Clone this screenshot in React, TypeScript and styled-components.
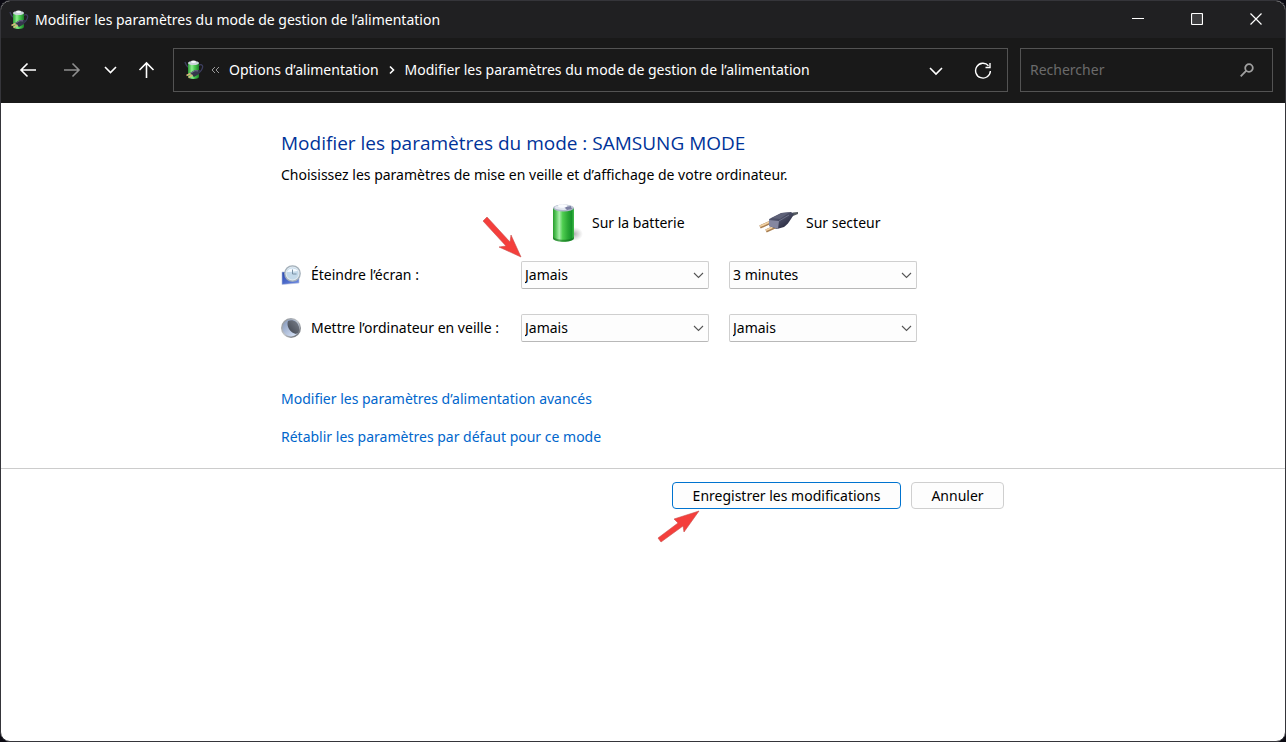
import React, { useState } from "react";
import styled, { createGlobalStyle } from "styled-components";

const GlobalStyle = createGlobalStyle`
  *, *::before, *::after { box-sizing: border-box; }
  html, body, #root { height: 100%; }
  body {
    margin: 0;
    background: #0b0a12;
    color: #000;
    font: 14px/20px "Noto Sans", "Open Sans", sans-serif;
  }
  button, input, select { font: inherit; color: inherit; margin: 0; }
  svg { display: block; flex: none; }
`;

const Window = styled.div`
  min-height: 100%;
  display: flex;
  flex-direction: column;
  border: 1px solid #35353a;
  border-radius: 10px;
  overflow: hidden;
  background: #fff;
`;

const TitleBar = styled.header`
  display: flex;
  align-items: center;
  height: 37px;
  padding-left: 8px;
  gap: 6px;
  background: #202022;
  color: #fff;
`;

const Title = styled.span`
  flex: 1;
  white-space: nowrap;
`;

const CaptionButtons = styled.div`
  display: flex;
  height: 100%;
`;

const CaptionButton = styled.button`
  display: grid;
  place-items: center;
  width: 59px;
  height: 100%;
  padding: 0 0 2px;
  border: 0;
  background: none;
  &:hover { background: #333336; }
`;

const Toolbar = styled.nav`
  display: flex;
  align-items: center;
  height: 65px;
  padding: 0 12px 2px 16px;
  background: #191919;
  color: #fff;
`;

const NavButton = styled.button<{ $dim?: boolean; $gap: number }>`
  padding: 0;
  margin-right: ${(p) => p.$gap}px;
  border: 0;
  background: none;
  color: ${(p) => (p.$dim ? "#8f8f8f" : "#fff")};
`;

const AddressBar = styled.div`
  display: flex;
  align-items: center;
  flex: 1;
  min-width: 0;
  height: 44px;
  padding: 0 15px 0 10px;
  border: 1px solid #535353;
`;

const Crumbs = styled.div`
  display: flex;
  align-items: center;
  flex: 1;
  min-width: 0;
  gap: 9px;
  margin-left: 7px;
  white-space: nowrap;
`;

const Crumb = styled.a`
  color: #fff;
  text-decoration: none;
`;

const SearchBox = styled.label`
  display: flex;
  align-items: center;
  width: 253px;
  height: 44px;
  margin-left: 12px;
  padding: 0 18px 0 9px;
  border: 1px solid #535353;
`;

const SearchInput = styled.input`
  flex: 1;
  min-width: 0;
  padding: 0;
  border: 0;
  outline: 0;
  background: none;
  &::placeholder { color: #6b6b6b; opacity: 1; }
`;

const Content = styled.main`
  padding: 27px 280px 21px;
`;

const Heading = styled.h1`
  margin: 0;
  font-family: "Open Sans", "Noto Sans", sans-serif;
  font-size: 19px;
  line-height: 26px;
  font-weight: 400;
  color: #003399;
`;

const Intro = styled.p`
  margin: 9px 0 0;
`;

const SettingsGrid = styled.div`
  display: grid;
  grid-template-columns: 220px 188px 188px;
  column-gap: 20px;
  row-gap: 25px;
  align-items: center;
  margin-top: 18px;
`;

const ColumnHeader = styled.div`
  display: flex;
  align-items: center;
  gap: 8px;
  height: 40px;
  padding-left: 30px;
  margin-bottom: -7px;
  white-space: nowrap;
`;

const RowLabel = styled.div`
  display: flex;
  align-items: center;
  gap: 10px;
  white-space: nowrap;
`;

const SelectWrap = styled.div`
  position: relative;
`;

const Select = styled.select`
  display: block;
  width: 100%;
  height: 28px;
  padding: 0 28px 0 3px;
  appearance: none;
  border: 1px solid #cfcfcf;
  border-bottom-color: #b8b8b8;
  border-radius: 2px;
  background: #fdfdfd;
`;

const SelectChevron = styled.svg`
  position: absolute;
  right: 5px;
  top: 11px;
  pointer-events: none;
`;

const Links = styled.div`
  display: flex;
  flex-direction: column;
  align-items: flex-start;
  gap: 18px;
  margin-top: 47px;
`;

const Link = styled.a`
  color: #0066cc;
  text-decoration: none;
  &:hover { text-decoration: underline; }
`;

const Footer = styled.footer`
  display: flex;
  justify-content: flex-end;
  gap: 10px;
  padding: 13px 281px;
  border-top: 1px solid #cccccc;
`;

const ButtonWrap = styled.div`
  position: relative;
`;

const Button = styled.button<{ $primary?: boolean; $width: number }>`
  display: block;
  width: ${(p) => p.$width}px;
  height: 27px;
  padding: 0;
  border: 1px solid ${(p) => (p.$primary ? "#0073cf" : "#cfcfcf")};
  border-radius: 4px;
  background: #fdfdfd;
  line-height: 24px;
  white-space: nowrap;
`;

const Pointer = styled.svg<{ $left: number; $top: number }>`
  position: absolute;
  left: ${(p) => p.$left}px;
  top: ${(p) => p.$top}px;
  pointer-events: none;
`;

const PowerIcon = () => (
  <svg width="20" height="20" viewBox="0 0 20 20" aria-hidden="true">
    <defs>
      <linearGradient id="cell" x1="0" x2="1">
        <stop offset="0" stopColor="#2b9a35" />
        <stop offset=".35" stopColor="#8df08e" />
        <stop offset=".6" stopColor="#4ccb52" />
        <stop offset="1" stopColor="#1b7f27" />
      </linearGradient>
    </defs>
    <path d="M1 2c1 3 1 4 4 6M14 6c4-3 6 0 3.500 4c-1 2-3 3-4 4" fill="none" stroke="#3c3d5e" strokeWidth="1.300" />
    <path d="M4 3v14c0 2.500 11 2.500 11 0V3z" fill="url(#cell)" />
    <ellipse cx="9.500" cy="3" rx="5.500" ry="2" fill="#c9d3da" />
    <ellipse cx="9.500" cy="1.800" rx="2.500" ry="1.200" fill="#f5f8fa" />
    <path d="M6 13l5-3 5 0-1 4-5 3z" fill="#34364c" />
    <path d="M7 13l4-2.300 3 .2" fill="none" stroke="#73758d" />
    <path d="M2.500 15.500l4-2M4.500 17.500l4-2.500" stroke="#d9b57b" strokeWidth="1.500" />
  </svg>
);

const BatteryIcon = () => (
  <svg width="33" height="40" viewBox="0 0 33 40" aria-hidden="true">
    <defs>
      <linearGradient id="battery" x1="0" x2="1">
        <stop offset="0" stopColor="#279c2c" />
        <stop offset=".15" stopColor="#5cc95f" />
        <stop offset=".3" stopColor="#a9efaa" />
        <stop offset=".46" stopColor="#4fce50" />
        <stop offset=".7" stopColor="#2ca936" />
        <stop offset=".88" stopColor="#16952a" />
        <stop offset="1" stopColor="#43bb4a" />
      </linearGradient>
      <radialGradient id="shade">
        <stop offset="0" stopColor="#777" stopOpacity=".6" />
        <stop offset="1" stopColor="#999" stopOpacity="0" />
      </radialGradient>
    </defs>
    <ellipse cx="23" cy="31" rx="9" ry="7" fill="url(#shade)" />
    <path d="M2 5v30c0 5 21 5 21 0V5z" fill="url(#battery)" />
    <path d="M2 33c0 5 21 5 21 0v2c0 5-21 5-21 0z" fill="#116b1c" opacity=".55" />
    <ellipse cx="12.500" cy="5" rx="10.500" ry="3.500" fill="#aeb7c8" />
    <ellipse cx="12.500" cy="4.500" rx="9" ry="2.500" fill="#e3e8f0" />
    <path d="M13 4l7-1 1 3-5 1z" fill="#7b7fa2" />
    <ellipse cx="11.500" cy="3" rx="4.500" ry="1.800" fill="#fafcff" />
  </svg>
);

const PlugIcon = () => (
  <svg width="39" height="24" viewBox="0 0 39 24" aria-hidden="true">
    <defs>
      <linearGradient id="plug" x1="0" y1="0" x2="1" y2="1">
        <stop offset="0" stopColor="#5c5f78" />
        <stop offset=".5" stopColor="#45485f" />
        <stop offset="1" stopColor="#17182c" />
      </linearGradient>
    </defs>
    <path d="M29 4l5-2.500 5-.5v2l-5 2-4 3z" fill="#555b60" />
    <path d="M1 16l11-5M7 20l11-5" stroke="#a87e51" strokeWidth="3.400" />
    <path d="M1 15.300l11-5M7 19.300l11-5" stroke="#f2d2a4" strokeWidth="1.800" />
    <path d="M10 9c0-1 1-1.500 2-2l10-5 10-1 3 2-3 5c-2 3-4 6-7 8l-7 2-8-3z" fill="url(#plug)" />
    <path d="M10 9l10 1-1 8-9-3z" fill="#8587a0" />
    <path d="M13 7l10-5 8-1-10 7z" fill="#666980" opacity=".7" />
    <path d="M20 10l10-6" stroke="#777b92" strokeWidth=".8" />
  </svg>
);

const DisplayIcon = () => (
  <svg width="20" height="20" viewBox="0 0 20 20" aria-hidden="true">
    <defs>
      <linearGradient id="screen" x1="0" y1="0" x2="1" y2="1">
        <stop offset="0" stopColor="#2847ad" />
        <stop offset="1" stopColor="#718ee6" />
      </linearGradient>
    </defs>
    <path d="M1 7h17v11L1 19.500z" fill="url(#screen)" stroke="#b6bfdc" strokeWidth=".6" />
    <circle cx="11.500" cy="8.500" r="7.700" fill="#e1eaf1" stroke="#a4b0ba" strokeWidth="1.300" />
    <circle cx="11.500" cy="8.500" r="6" fill="#c3d9ea" />
    <path d="M6 7a6 5 0 0 1 11-1q-6 1-11 1z" fill="#f5faff" />
    <path d="M11.500 4.500v4.500H15.500" fill="none" stroke="#7890a4" />
  </svg>
);

const SleepIcon = () => (
  <svg width="20" height="20" viewBox="0 0 20 20" aria-hidden="true">
    <defs>
      <linearGradient id="rim" x1="0" y1="0" x2="1" y2="1">
        <stop offset="0" stopColor="#858a90" />
        <stop offset=".5" stopColor="#bfc3c8" />
        <stop offset="1" stopColor="#51565d" />
      </linearGradient>
      <linearGradient id="moon" x1="0" y1="0" x2="1" y2="1">
        <stop offset="0" stopColor="#8295b8" />
        <stop offset="1" stopColor="#e2edff" />
      </linearGradient>
      <linearGradient id="night" x1="0" y1="1" x2="1" y2="0">
        <stop offset="0" stopColor="#3d424d" />
        <stop offset="1" stopColor="#7a808b" />
      </linearGradient>
    </defs>
    <circle cx="10" cy="10" r="10" fill="url(#rim)" />
    <circle cx="10" cy="10" r="8.400" fill="url(#moon)" />
    <path d="M7 3c5-2 10 1 11 6s-1 6-3 7C9 15 5 8 7 3z" fill="url(#night)" />
  </svg>
);

type FieldProps = { label: string; initial: string; children?: React.ReactNode };

const Field = ({ label, initial, children }: FieldProps) => {
  const [value, setValue] = useState(initial);
  return (
    <SelectWrap>
      <Select aria-label={label} value={value} onChange={(e) => setValue(e.target.value)}>
        <option>3 minutes</option>
        <option>Jamais</option>
      </Select>
      <SelectChevron width="11" height="7" viewBox="0 0 11 7" aria-hidden="true">
        <path d="M1 1l4.500 4.500L10 1" fill="none" stroke="#555" strokeWidth="1.100" />
      </SelectChevron>
      {children}
    </SelectWrap>
  );
};

const stroke = { fill: "none", stroke: "currentColor", strokeWidth: 1.6 } as const;

export default function App() {
  return (
    <>
      <GlobalStyle />
      <Window>
        <TitleBar>
          <PowerIcon />
          <Title>Modifier les paramètres du mode de gestion de l’alimentation</Title>
          <CaptionButtons>
            <CaptionButton aria-label="Réduire">
              <svg width="12" height="12" viewBox="0 0 12 12"><path d="M0 5.500h12" stroke="#fff" /></svg>
            </CaptionButton>
            <CaptionButton aria-label="Agrandir">
              <svg width="12" height="12" viewBox="0 0 12 12">
                <rect x=".5" y=".5" width="11" height="11" rx="1" fill="#3d3d3f" stroke="#fff" strokeWidth="1.200" />
              </svg>
            </CaptionButton>
            <CaptionButton aria-label="Fermer">
              <svg width="12" height="12" viewBox="0 0 12 12"><path d="M.5.5l11 11M11.500.5l-11 11" stroke="#fff" strokeWidth="1.200" /></svg>
            </CaptionButton>
          </CaptionButtons>
        </TitleBar>

        <Toolbar>
          <NavButton aria-label="Précédent" $gap={22}>
            <svg width="22" height="18" viewBox="0 0 22 18"><path d="M19 9H4M10.500 2.500L4 9l6.500 6.500" {...stroke} /></svg>
          </NavButton>
          <NavButton aria-label="Suivant" $dim $gap={20}>
            <svg width="22" height="18" viewBox="0 0 22 18"><path d="M3 9h15M11.500 2.500L18 9l-6.500 6.500" {...stroke} /></svg>
          </NavButton>
          <NavButton aria-label="Emplacements récents" $gap={20}>
            <svg width="14" height="18" viewBox="0 0 14 18"><path d="M2 6l5.500 5.500L13 6" {...stroke} /></svg>
          </NavButton>
          <NavButton aria-label="Dossier parent" $gap={18}>
            <svg width="18" height="18" viewBox="0 0 18 18"><path d="M9.500 17V2M2.500 9l7-7 7 7" {...stroke} /></svg>
          </NavButton>

          <AddressBar>
            <PowerIcon />
            <Crumbs>
              <svg width="9" height="8" viewBox="0 0 9 8" aria-hidden="true">
                <path d="M4 1L1 4l3 3M8 1L5 4l3 3" fill="none" stroke="#9a9a9a" />
              </svg>
              <Crumb href="#options">Options d’alimentation</Crumb>
              <svg width="8" height="10" viewBox="0 0 8 10" aria-hidden="true">
                <path d="M2 1.500L5.500 5 2 8.500" {...stroke} />
              </svg>
              <Crumb href="#mode">Modifier les paramètres du mode de gestion de l’alimentation</Crumb>
            </Crumbs>
            <NavButton aria-label="Historique" $gap={31}>
              <svg width="14" height="18" viewBox="0 0 14 18"><path d="M1 7l6 6 6-6" {...stroke} /></svg>
            </NavButton>
            <NavButton aria-label="Actualiser" $gap={0}>
              <svg width="18" height="18" viewBox="0 0 18 18">
                <path d="M14.500 4.700A7.400 7.400 0 1 0 16.400 10M16 2v4.500h-4.500" {...stroke} strokeWidth={1.4} />
              </svg>
            </NavButton>
          </AddressBar>

          <SearchBox>
            <SearchInput type="text" placeholder="Rechercher" aria-label="Rechercher" />
            <svg width="14" height="14" viewBox="0 0 14 14" aria-hidden="true">
              <circle cx="9" cy="5" r="3.800" fill="none" stroke="#a0a0a0" strokeWidth="1.800" />
              <path d="M6.300 7.700L.7 13.300" stroke="#a0a0a0" strokeWidth="1.800" />
            </svg>
          </SearchBox>
        </Toolbar>

        <Content>
          <Heading>Modifier les paramètres du mode : SAMSUNG MODE</Heading>
          <Intro>Choisissez les paramètres de mise en veille et d’affichage de votre ordinateur.</Intro>

          <SettingsGrid>
            <span />
            <ColumnHeader><BatteryIcon />Sur la batterie</ColumnHeader>
            <ColumnHeader><PlugIcon />Sur secteur</ColumnHeader>

            <RowLabel><DisplayIcon />Éteindre l’écran :</RowLabel>
            <Field label="Éteindre l’écran, sur la batterie" initial="Jamais">
              <Pointer $left={-39} $top={-45} width="40" height="44" viewBox="0 0 40 44" aria-hidden="true">
                <path d="M1 5l4-4 23 25 1-7 10 22-22-10 7-1z" fill="#f43f3c" stroke="#c9504e" strokeWidth=".6" />
              </Pointer>
            </Field>
            <Field label="Éteindre l’écran, sur secteur" initial="3 minutes" />

            <RowLabel><SleepIcon />Mettre l’ordinateur en veille :</RowLabel>
            <Field label="Mettre l’ordinateur en veille, sur la batterie" initial="Jamais" />
            <Field label="Mettre l’ordinateur en veille, sur secteur" initial="Jamais" />
          </SettingsGrid>

          <Links>
            <Link href="#avances">Modifier les paramètres d’alimentation avancés</Link>
            <Link href="#defaut">Rétablir les paramètres par défaut pour ce mode</Link>
          </Links>
        </Content>

        <Footer>
          <ButtonWrap>
            <Button $primary $width={229}>Enregistrer les modifications</Button>
            <Pointer $left={-15} $top={28} width="43" height="34" viewBox="0 0 43 34" aria-hidden="true">
              <path d="M1 28l20-15-4-4L42 1 27 22l-1-6L4 32z" fill="#f43f3c" stroke="#c9504e" strokeWidth=".6" />
            </Pointer>
          </ButtonWrap>
          <Button $width={93}>Annuler</Button>
        </Footer>
      </Window>
    </>
  );
}
